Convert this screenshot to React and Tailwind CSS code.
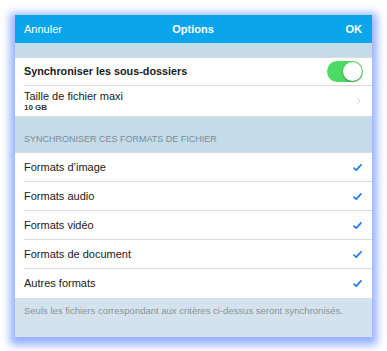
import { ChevronRight } from 'lucide-react';

function Check() {
    return (
        <svg width="9" height="7" viewBox="0 0 10 8" className="text-[#1a7cf5]">
            <path d="M1 4.6 L3.6 7 L9 1" fill="none" stroke="currentColor" strokeWidth="1.9" strokeLinecap="round" strokeLinejoin="round" />
        </svg>
    );
}

function Row({ label, children, last }) {
    return (
        <div className={`h-[29px] flex items-center pr-[10px] ml-[9px] ${last ? '' : 'border-b border-[#dcdcdc]'}`}>
            <span className="flex-1 text-[11px] text-[#1a1a1a]">{label}</span>
            {children}
        </div>
    );
}

const formats = ['Formats d’image', 'Formats audio', 'Formats vidéo', 'Formats de document', 'Autres formats'];

export default function App() {
    return (
        <div className="w-[387px] h-[351px] bg-white pt-[15px] pl-[15px]" style={{ fontFamily: '"Liberation Sans", Arial, sans-serif' }}>
            <div className="w-[357px] h-[322px] flex flex-col bg-[#c4dce9] shadow-[0_3px_8px_5px_rgba(130,165,255,0.85)]">
                {/* header */}
                <div className="h-[28px] bg-[#0ba5ec] flex items-center pl-[9px] pr-[10px] text-white text-[11px]">
                    <span className="flex-1">Annuler</span>
                    <span className="flex-1 text-center font-bold">Options</span>
                    <span className="flex-1 text-right font-bold">OK</span>
                </div>
                <div className="h-[14px] shrink-0" />

                <div className="bg-white border-t border-[#dcdcdc]">
                    <div className="h-[28px] flex items-center pr-[9px] border-b border-[#dcdcdc] ml-[9px]">
                        <span className="flex-1 text-[10.8px] font-bold text-[#1a1a1a]">Synchroniser les sous-dossiers</span>
                        <div className="w-[36px] h-[21px] rounded-full bg-[#4cd964] relative">
                            <div className="absolute right-[1px] top-[1px] w-[19px] h-[19px] rounded-full bg-white shadow-[0_1px_2px_rgba(0,0,0,0.35)]" />
                        </div>
                    </div>
                    <div className="h-[30px] flex items-center pr-[8px] ml-[9px]">
                        <div className="flex-1 flex flex-col leading-none">
                            <span className="text-[11px] text-[#1a1a1a]">Taille de fichier maxi</span>
                            <span className="text-[8px] font-bold text-[#333] mt-[2px]">10 GB</span>
                        </div>
                        <ChevronRight className="w-[10px] h-[10px] text-[#c4c4c7]" strokeWidth={2} />
                    </div>
                </div>

                <div className="h-[36px] border-t border-[#dcdcdc] flex items-end pb-[6px] pl-[9px] text-[9px] text-[#7d8b95]">
                    SYNCHRONISER CES FORMATS DE FICHIER
                </div>

                <div className="bg-white border-t border-[#dcdcdc]">
                    {formats.map((f, i) => (
                        <Row key={f} label={f} last={i === formats.length - 1}>
                            <Check />
                        </Row>
                    ))}
                </div>

                <div className="flex-1 bg-[#d3e2ec] border-t border-[#dcdcdc] pl-[9px] pt-[5px] text-[9.5px] text-[#8a949b]">
                    Seuls les fichiers correspondant aux critères ci-dessus seront synchronisés.
                </div>
            </div>
        </div>
    );
}
